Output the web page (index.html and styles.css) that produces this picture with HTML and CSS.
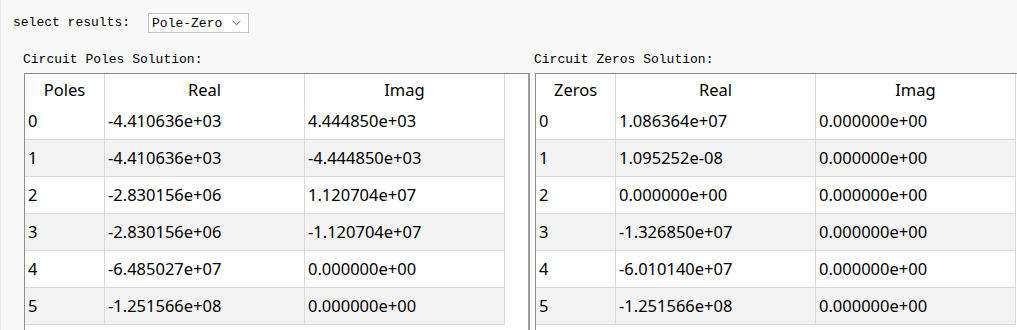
FILE: index.html
```html
<!DOCTYPE html>
<html lang="en">
<head>
    <meta charset="UTF-8">
    <title>Pole-Zero Results</title>
    <link rel="stylesheet" href="styles.css">
</head>
<body>
    <div class="barra">
        <span class="rotulo">select results:</span>
        <div class="combo">
            <span>Pole-Zero</span>
            <svg class="seta" width="9" height="6" viewBox="0 0 9 6">
                <polyline points="0.5,0.8 4.5,4.8 8.5,0.8" fill="none" stroke="#606060" stroke-width="1"/>
            </svg>
        </div>
    </div>

    <div class="paineis">
        <div class="painel painel-esq">
            <div class="titulo">Circuit Poles Solution:</div>
            <div class="quadro">
                <div class="grade">
                    <div class="linha cabecalho"><div>Poles</div><div>Real</div><div>Imag</div></div>
                    <div class="linha"><div>0</div><div>-4.410636e+03</div><div>4.444850e+03</div></div>
                    <div class="linha alt"><div>1</div><div>-4.410636e+03</div><div>-4.444850e+03</div></div>
                    <div class="linha"><div>2</div><div>-2.830156e+06</div><div>1.120704e+07</div></div>
                    <div class="linha alt"><div>3</div><div>-2.830156e+06</div><div>-1.120704e+07</div></div>
                    <div class="linha"><div>4</div><div>-6.485027e+07</div><div>0.000000e+00</div></div>
                    <div class="linha alt"><div>5</div><div>-1.251566e+08</div><div>0.000000e+00</div></div>
                </div>
            </div>
        </div>

        <div class="painel painel-dir">
            <div class="titulo">Circuit Zeros Solution:</div>
            <div class="quadro">
                <div class="grade">
                    <div class="linha cabecalho"><div>Zeros</div><div>Real</div><div>Imag</div></div>
                    <div class="linha"><div>0</div><div>1.086364e+07</div><div>0.000000e+00</div></div>
                    <div class="linha alt"><div>1</div><div>1.095252e-08</div><div>0.000000e+00</div></div>
                    <div class="linha"><div>2</div><div>0.000000e+00</div><div>0.000000e+00</div></div>
                    <div class="linha alt"><div>3</div><div>-1.326850e+07</div><div>0.000000e+00</div></div>
                    <div class="linha"><div>4</div><div>-6.010140e+07</div><div>0.000000e+00</div></div>
                    <div class="linha alt"><div>5</div><div>-1.251566e+08</div><div>0.000000e+00</div></div>
                </div>
            </div>
        </div>
    </div>
</body>
</html>
```

FILE: styles.css
```css
* {
    box-sizing: border-box;
    margin: 0;
    padding: 0;
}

body {
    background-color: #f8f8f8;
    font-family: 'Noto Sans', sans-serif;
    width: 1017px;
    height: 330px;
    overflow: hidden;
    border-left: 1px solid #ececec;
}

.barra {
    display: flex;
    align-items: flex-start;
    gap: 18px;
    padding: 13px 0 0 12px;
    height: 46px;
    font-family: 'Liberation Mono', monospace;
    font-size: 13px;
    color: #000;
}

.rotulo {
    line-height: 20px;
}

.combo {
    display: flex;
    align-items: center;
    justify-content: space-between;
    width: 101px;
    height: 20px;
    padding: 0 7px 0 3px;
    background-color: #fff;
    border: 1px solid #c4c4c4;
}

.seta {
    display: block;
    margin-top: -1px;
}

.paineis {
    display: flex;
    height: 284px;
}

.painel {
    display: flex;
    flex-direction: column;
}

.painel-esq {
    width: 529px;
    padding-left: 22px;
}

.painel-dir {
    flex: 1;
    padding-left: 4px;
}

.titulo {
    font-family: 'Liberation Mono', monospace;
    font-size: 13px;
    height: 27px;
    line-height: 28px;
    color: #000;
}

.quadro {
    flex: 1;
    margin-left: 1px;
    background-color: #fff;
    border-top: 1px solid #8a8a8a;
    border-left: 1px solid #8f8f8f;
}

.painel-esq .quadro {
    border-right: 2px solid #9c9c9c;
}

.grade {
    width: 480px;
    font-size: 16.5px;
    color: #000;
}

.linha {
    display: grid;
    grid-template-columns: 80px 200px 200px;
    height: 37px;
    line-height: 36px;
    border-bottom: 1px solid #d9d9d9;
}

.linha > div {
    border-right: 1px solid #d9d9d9;
    padding-left: 3px;
    white-space: nowrap;
}

.alt {
    background-color: #f3f3f3;
}

.cabecalho {
    height: 29px;
    line-height: 31px;
    border-bottom: none;
}

.cabecalho > div {
    text-align: center;
    padding-left: 0;
}
```
